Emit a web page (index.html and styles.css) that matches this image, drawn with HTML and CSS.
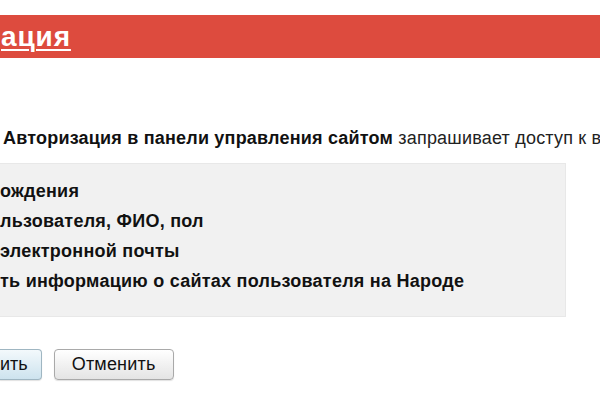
FILE: index.html
```html
<!DOCTYPE html>
<html lang="ru">
<head>
<meta charset="utf-8">
<title>Авторизация</title>
<link rel="stylesheet" href="styles.css">
</head>
<body>
<header class="bar">
  <h1 class="title"><a href="#">ация</a></h1>
</header>
<main class="page">
  <p class="intro"><b>Авторизация в панели управления сайтом</b> запрашивает доступ к в</p>
  <ul class="scopes">
    <li>ождения</li>
    <li>льзователя, ФИО, пол</li>
    <li>электронной почты</li>
    <li>ть информацию о сайтах пользователя на Народе</li>
  </ul>
  <div class="actions">
    <button class="btn btn-primary" type="button">ить</button>
    <button class="btn" type="button">Отменить</button>
  </div>
</main>
</body>
</html>
```
FILE: styles.css
```css
html, body {
  margin: 0;
  padding: 0;
  background: #fff;
}
body {
  font-family: "Liberation Sans", Arial, Helvetica, sans-serif;
  color: #111;
  width: 600px;
  height: 400px;
  overflow: hidden;
}
.bar {
  margin-top: 15px;
  height: 43px;
  background: #dd4b3e;
  display: flex;
  align-items: center;
}
.title {
  margin: 0 0 0 1px;
  font-size: 28px;
  font-weight: bold;
  line-height: 43px;
  letter-spacing: 0.9px;
  white-space: nowrap;
}
.title a {
  color: #fff;
  text-decoration: underline;
  text-decoration-thickness: 2px;
  text-underline-offset: 3px;
}
.page {
  width: 600px;
}
.intro {
  margin: 69px 0 14px 3px;
  font-size: 18px;
  line-height: 22px;
  letter-spacing: 0.2px;
  white-space: nowrap;
  color: #222;
}
.intro b {
  color: #111;
}
.scopes {
  list-style: none;
  margin: 0;
  padding: 12px 0 20px 0;
  width: 566px;
  box-sizing: border-box;
  background: #f1f1f1;
  border: 1px solid #e8e8e8;
  border-left: 0;
}
.scopes li {
  font-size: 18px;
  font-weight: bold;
  line-height: 30px;
  letter-spacing: 0.25px;
  white-space: nowrap;
}
.actions {
  display: flex;
  gap: 12px;
  margin-top: 32px;
}
.btn {
  font-family: "Liberation Sans", Arial, Helvetica, sans-serif;
  font-size: 18px;
  letter-spacing: 0.2px;
  color: #111;
  height: 31px;
  padding: 0 17px;
  border: 1px solid #a9a9a9;
  border-radius: 4px;
  background: linear-gradient(#ffffff, #e4e4e4);
  box-shadow: 0 1px 1px rgba(0,0,0,0.12);
}
.btn-primary {
  padding: 0 13px 0 0;
  letter-spacing: 0;
  border-color: #9fb6c2;
  border-left: 0;
  border-radius: 0 4px 4px 0;
  background: linear-gradient(#f3f9fc, #cde3ee);
}
```
